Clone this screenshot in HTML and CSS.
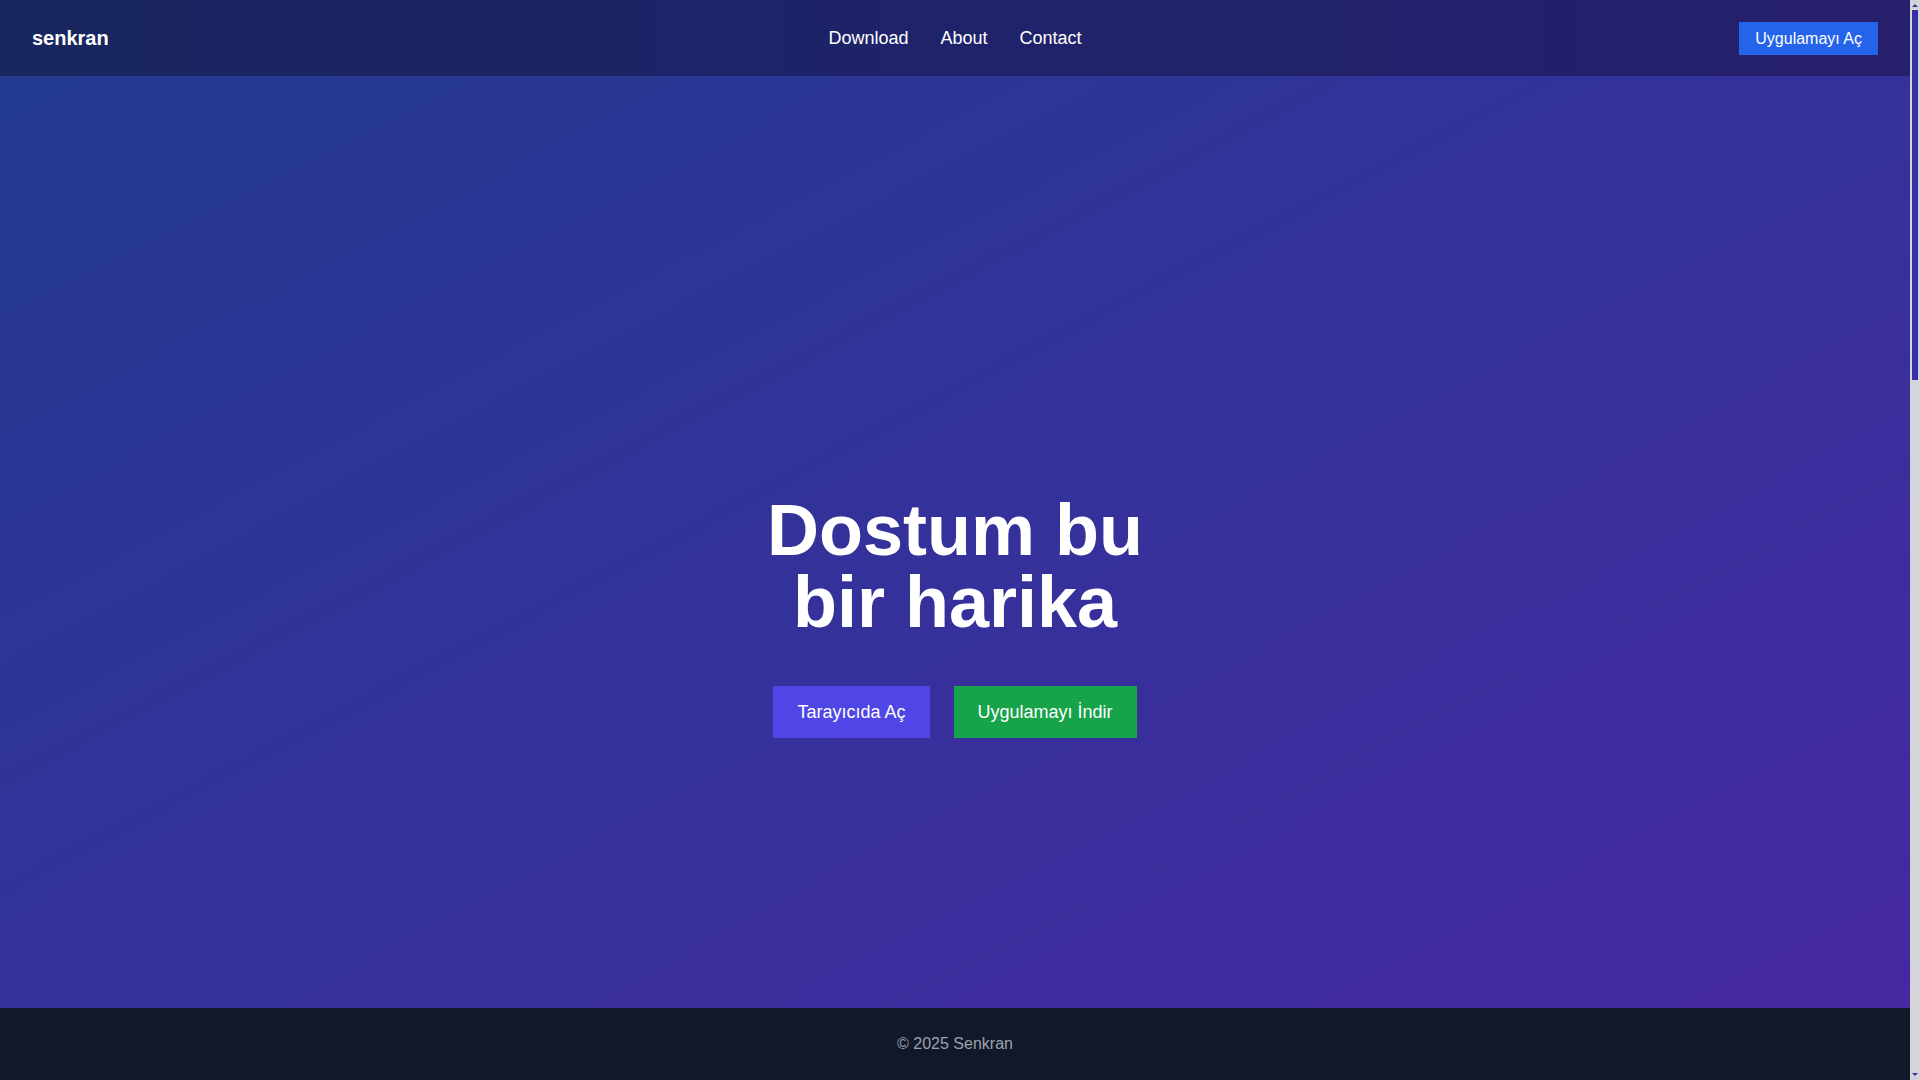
FILE: index.html
```html
<!DOCTYPE html>
<html lang="tr">
<head>
<meta charset="utf-8">
<title>Senkran</title>
<link rel="stylesheet" href="styles.css">
</head>
<body>
<div class="page">
  <header class="nav">
    <a class="logo" href="#">senkran</a>
    <nav class="links">
      <a href="#download">Download</a>
      <a href="#about">About</a>
      <a href="#contact">Contact</a>
    </nav>
    <div class="nav-end">
      <a class="btn-open" href="#">Uygulamayı Aç</a>
    </div>
  </header>
  <section class="hero">
    <h1 class="hero-title">Dostum bu bir harika</h1>
    <div class="hero-actions">
      <a class="btn btn-indigo" href="#">Tarayıcıda Aç</a>
      <a class="btn btn-green" href="#download">Uygulamayı İndir</a>
    </div>
  </section>
  <footer class="footer">© 2025 Senkran</footer>
</div>
<div class="scrollbar" aria-hidden="true">
  <span class="arrow arrow-up"></span>
  <span class="thumb"></span>
  <span class="arrow arrow-down"></span>
</div>
</body>
</html>
```

FILE: styles.css
```css
html, body {
  margin: 0;
  height: 100%;
  overflow: hidden;
}
body {
  display: grid;
  grid-template-columns: 1fr 10px;
  font-family: "Liberation Sans", Arial, sans-serif;
  color: #fff;
  background: #111827;
}
a {
  color: inherit;
  text-decoration: none;
}
.page {
  height: 100vh;
  display: grid;
  grid-template-rows: 76px 1fr 72px;
}
.nav {
  grid-row: 1;
  grid-column: 1;
  padding: 0 32px;
  display: grid;
  grid-template-columns: 1fr auto 1fr;
  align-items: center;
  background: linear-gradient(to right, #19265f, #1f236a 50%, #261f6c);
}
.logo {
  justify-self: start;
  font-size: 20px;
  font-weight: bold;
  line-height: 28px;
}
.links {
  display: flex;
  gap: 32px;
  font-size: 18px;
  line-height: 28px;
}
.nav-end {
  justify-self: end;
  display: flex;
}
.btn-open {
  background: #2563eb;
  padding: 7px 16px;
  font-size: 16px;
  line-height: 19px;
}
.hero {
  grid-row: 2 / 4;
  grid-column: 1;
  padding-top: 76px;
  display: flex;
  flex-direction: column;
  align-items: center;
  justify-content: center;
  text-align: center;
  background: linear-gradient(to bottom right, #233a8f, #35319b 50%, #4727a1);
}
.hero-title {
  margin: 0;
  max-width: 448px;
  font-size: 72px;
  line-height: 72px;
  font-weight: bold;
}
.hero-actions {
  margin-top: 48px;
  display: flex;
  gap: 24px;
}
.btn {
  padding: 12px 24px;
  font-size: 18px;
  line-height: 28px;
}
.btn-indigo {
  background: #4f46e5;
}
.btn-green {
  background: #16a34a;
}
.footer {
  grid-row: 3;
  grid-column: 1;
  z-index: 1;
  padding: 24px;
  background: #111827;
  color: #9ca3af;
  text-align: center;
  font-size: 16px;
  line-height: 24px;
}
.scrollbar {
  height: 100vh;
  box-sizing: border-box;
  padding: 4px 0;
  display: flex;
  flex-direction: column;
  align-items: center;
  background: #d4d5da;
}
.arrow {
  width: 0;
  height: 0;
  border-left: 3px solid transparent;
  border-right: 3px solid transparent;
}
.arrow-up {
  border-bottom: 3px solid #3730a3;
}
.arrow-down {
  margin-top: auto;
  border-top: 3px solid #3730a3;
}
.thumb {
  margin-top: 3px;
  width: 6px;
  height: 370px;
  background: #3730a3;
}
```
